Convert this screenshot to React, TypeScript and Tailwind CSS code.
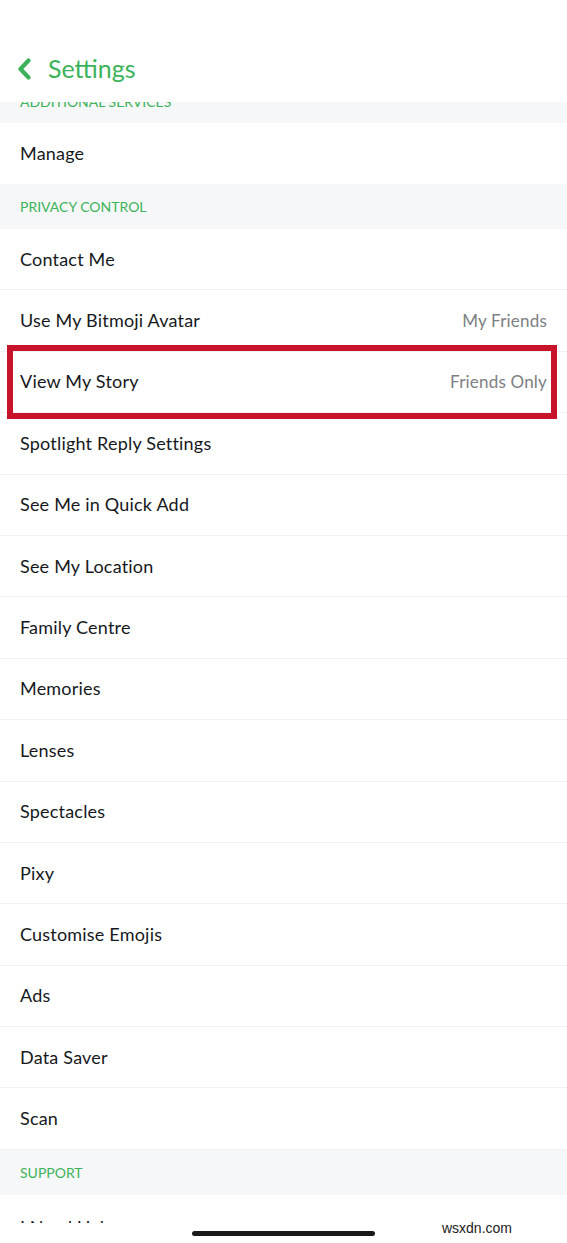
import React from "react";

const rowsTop = ["Manage"];
const privacy: [string, string?][] = [
  ["Contact Me"],
  ["Use My Bitmoji Avatar", "My Friends"],
  ["View My Story", "Friends Only"],
  ["Spotlight Reply Settings"],
  ["See Me in Quick Add"],
  ["See My Location"],
  ["Family Centre"],
  ["Memories"],
  ["Lenses"],
  ["Spectacles"],
  ["Pixy"],
  ["Customise Emojis"],
  ["Ads"],
  ["Data Saver"],
  ["Scan"],
];

function Row({ label, value, highlight }: { label: string; value?: string; highlight?: boolean }) {
  return (
    <div className={`relative flex h-[61.4px] items-center justify-between border-b border-[#f0f1f2] bg-white px-5 ${highlight ? "z-10" : ""}`}>
      <span className="text-[18px] tracking-[0.2px] text-[#16191c]">{label}</span>
      {value && <span className="text-[17px] tracking-[0.2px] text-[#7d8083]">{value}</span>}
      {highlight && (
        <div className="pointer-events-none absolute left-[7px] right-[10px] top-[-7px] bottom-[-7px] border-[6px] border-[#c8142a]" />
      )}
    </div>
  );
}

function Section({ title }: { title: string }) {
  return (
    <div className="flex h-[45px] items-center bg-[#f6f7f8] px-5">
      <span className="text-[14px] text-[#3cb35a]">{title}</span>
    </div>
  );
}

export default function App() {
  return (
    <div className="relative h-[1243px] w-[567px] overflow-hidden bg-white" style={{ fontFamily: "Lato, 'Noto Sans', sans-serif" }}>
      <div className="flex h-[102px] items-end bg-white pb-[21px]">
        <div className="flex items-center pl-[17px]">
          <svg width="15" height="22" viewBox="0 0 15 22" className="mr-[16px]">
            <path d="M11.5 2.5 L3.5 11 L11.5 19.5" fill="none" stroke="#3cb35a" strokeWidth="4.2" strokeLinecap="round" strokeLinejoin="round" />
          </svg>
          <span className="text-[25px] leading-none text-[#3cb35a]">Settings</span>
        </div>
      </div>
      <div className="relative h-[21px] overflow-hidden bg-[#f6f7f8] px-5">
        <span className="absolute left-5 top-[-11px] text-[14px] text-[#3cb35a]">ADDITIONAL SERVICES</span>
      </div>
      {rowsTop.map((r) => (
        <div key={r} className="flex h-[61px] items-center bg-white px-5">
          <span className="text-[18px] tracking-[0.2px] text-[#16191c]">{r}</span>
        </div>
      ))}
      <Section title="PRIVACY CONTROL" />
      {privacy.map(([l, v]) => (
        <Row key={l} label={l} value={v} highlight={l === "View My Story"} />
      ))}
      <Section title="SUPPORT" />
      <div className="relative h-[40px] overflow-hidden bg-white px-5">
        <span className="absolute left-5 top-[19px] text-[18px] text-[#16191c]">I Need Help</span>
        <div className="absolute bottom-0 left-0 right-0 h-[12px] bg-white" />
      </div>
      <div className="absolute bottom-[7px] left-[192px] h-[5px] w-[183px] rounded-full bg-[#1a1a1a]" />
      <div className="absolute bottom-[4px] right-[55px] text-[14px] text-[#222]" style={{ fontFamily: "'Liberation Sans', Arial, sans-serif" }}>
        wsxdn.com
      </div>
    </div>
  );
}
